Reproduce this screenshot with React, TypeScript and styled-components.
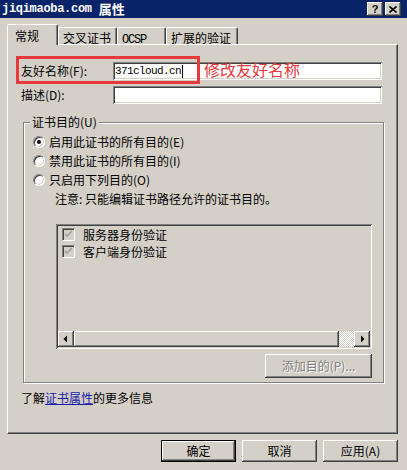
import React from 'react';
import styled, { createGlobalStyle, css } from 'styled-components';

const cjk = `"Noto Sans CJK SC", "Liberation Sans", sans-serif`;
const mono = `"Liberation Mono", "DejaVu Sans Mono", monospace`;

const GlobalStyle = createGlobalStyle`
  html, body { margin: 0; padding: 0; background: #d4d0c8; }
  body { font-family: ${cjk}; font-size: 12px; color: #000; }
  * { box-sizing: border-box; }
`;

const raised = css`
  background: #d4d0c8;
  box-shadow: inset -1px -1px #404040, inset 1px 1px #fff, inset -2px -2px #808080, inset 2px 2px #d4d0c8;
`;

const sunken = css`
  box-shadow: inset 1px 1px #808080, inset -1px -1px #fff, inset 2px 2px #404040, inset -2px -2px #d4d0c8;
`;

const Window = styled.div`
  width: 407px;
  height: 470px;
  background: #d4d0c8;
  display: flex;
  flex-direction: column;
  overflow: hidden;
`;

const TitleBar = styled.div`
  height: 18px;
  flex: none;
  background: #0a246a;
  display: flex;
  align-items: center;
  padding: 0 6px 0 2px;
`;

const TitleText = styled.div`
  flex: 1;
  display: flex;
  align-items: center;
  gap: 7px;
  color: #fff;
  line-height: 14px;
`;

const TitleDomain = styled.span`
  font-family: ${mono};
  font-size: 12px;
  font-weight: bold;
  letter-spacing: -0.3px;
`;

const TitleCjk = styled.span`
  font-family: ${cjk};
  font-size: 13px;
  font-weight: bold;
`;

const TitleButtons = styled.div`
  display: flex;
  gap: 2px;
`;

const TitleButton = styled.div`
  ${raised};
  width: 16px;
  height: 14px;
  display: flex;
  align-items: center;
  justify-content: center;
  font: bold 11px "Liberation Sans", sans-serif;
  color: #000;
`;

const Body = styled.div`
  flex: 1;
  display: flex;
  flex-direction: column;
  padding: 0 9px 0 7px;
`;

const TabStrip = styled.div`
  display: flex;
  align-items: flex-end;
  height: 20px;
  margin-top: 6px;
  position: relative;
  z-index: 1;
`;

const Tab = styled.div<{ $w: number; $active?: boolean }>`
  width: ${(p) => p.$w}px;
  height: ${(p) => (p.$active ? 21 : 17)}px;
  margin-bottom: ${(p) => (p.$active ? -1 : 0)}px;
  background: #d4d0c8;
  border-top: 1px solid #fff;
  border-left: 1px solid #fff;
  border-right: 1px solid #404040;
  border-radius: 2px 2px 0 0;
  box-shadow: inset -1px 0 #808080;
  padding: ${(p) => (p.$active ? '4px 0 0 7px' : '3px 0 0 4px')};
  font-size: 12px;
  line-height: 14px;
  white-space: nowrap;
`;

const Mono = styled.span`
  font-family: ${mono};
  font-size: 12px;
  letter-spacing: -1.2px;
`;

const Panel = styled.div`
  width: 391px;
  height: 390px;
  flex: none;
  border-top: 1px solid #fff;
  border-left: 1px solid #fff;
  border-right: 1px solid #404040;
  border-bottom: 1px solid #404040;
  box-shadow: inset -1px -1px #808080;
  padding: 17px 0 0 13px;
  display: flex;
  flex-direction: column;
`;

const FieldRow = styled.div<{ $gap?: number }>`
  position: relative;
  display: flex;
  align-items: center;
  height: 18px;
  margin-top: ${(p) => p.$gap ?? 0}px;
`;

const FieldLabel = styled.div`
  width: 92px;
  line-height: 14px;
  white-space: nowrap;
`;

const TextInput = styled.div`
  ${sunken};
  background: #fff;
  width: 269px;
  height: 18px;
  padding: 0 0 0 2px;
  display: flex;
  align-items: center;
  font-family: ${mono};
  font-size: 11px;
  letter-spacing: -0.6px;
`;

const Caret = styled.span`
  display: inline-block;
  width: 1px;
  height: 13px;
  background: #000;
  margin-left: 1px;
`;

const Highlight = styled.div`
  position: absolute;
  left: -5px;
  top: -6px;
  width: 184px;
  height: 28px;
  border: 3px solid #e8393b;
  pointer-events: none;
`;

const Annotation = styled.div`
  position: absolute;
  left: 183px;
  top: -2px;
  font-family: ${cjk};
  font-size: 16px;
  line-height: 18px;
  color: #e8393b;
  white-space: nowrap;
`;

const Group = styled.div`
  position: relative;
  margin: 18px 0 0 2px;
  width: 361px;
  height: 261px;
  border: 1px solid #808080;
  box-shadow: 1px 1px 0 #fff, inset 1px 1px 0 #fff;
  padding: 9px 0 0 9px;
  display: flex;
  flex-direction: column;
`;

const Legend = styled.div`
  position: absolute;
  top: -8px;
  left: 6px;
  padding: 0 2px;
  background: #d4d0c8;
  line-height: 14px;
`;

const RadioRow = styled.div`
  display: flex;
  align-items: center;
  gap: 4px;
  height: 19px;
  line-height: 14px;
`;

const Radio = styled.div<{ $checked?: boolean }>`
  width: 12px;
  height: 12px;
  border-radius: 50%;
  background: #fff;
  border: 1px solid;
  border-color: #808080 #fff #fff #808080;
  box-shadow: inset 1px 1px 0 #404040, inset -1px -1px 0 #d4d0c8;
  display: flex;
  align-items: center;
  justify-content: center;
  &::after {
    content: '';
    display: ${(p) => (p.$checked ? 'block' : 'none')};
    width: 4px;
    height: 4px;
    border-radius: 50%;
    background: #000;
  }
`;

const Note = styled.div`
  height: 20px;
  line-height: 20px;
  padding-left: 22px;
  white-space: nowrap;
`;

const ListArea = styled.div`
  margin: 15px 0 0 23px;
  width: 316px;
  display: flex;
  flex-direction: column;
`;

const ListBox = styled.div`
  ${sunken};
  background: #d4d0c8;
  height: 125px;
  padding: 2px;
  display: flex;
  flex-direction: column;
`;

const ListItem = styled.div`
  display: flex;
  align-items: center;
  gap: 8px;
  height: 17px;
  padding-left: 4px;
  line-height: 14px;
`;

const CheckBox = styled.div`
  width: 13px;
  height: 13px;
  background: #d4d0c8;
  border: 1px solid;
  border-color: #808080 #fff #fff #808080;
  box-shadow: inset 1px 1px 0 #404040, inset -1px -1px 0 #d4d0c8;
  display: flex;
  align-items: center;
  justify-content: center;
`;

const ScrollBar = styled.div`
  margin-top: auto;
  height: 16px;
  display: flex;
`;

const ScrollButton = styled.div`
  ${raised};
  width: 16px;
  height: 16px;
  flex: none;
  display: flex;
  align-items: center;
  justify-content: center;
`;

const ScrollThumb = styled.div`
  ${raised};
  flex: 1;
`;

const ScrollTrack = styled.div`
  width: 15px;
  flex: none;
  background: repeating-conic-gradient(#fff 0 25%, #d4d0c8 0 50%) 0 0 / 2px 2px;
`;

const PushButton = styled.div<{ $w: number; $h: number; $default?: boolean; $disabled?: boolean }>`
  ${raised};
  width: ${(p) => p.$w}px;
  height: ${(p) => p.$h}px;
  display: flex;
  align-items: center;
  justify-content: center;
  line-height: 14px;
  color: ${(p) => (p.$disabled ? '#808080' : '#000')};
  text-shadow: ${(p) => (p.$disabled ? '1px 1px 0 #fff' : 'none')};
  ${(p) =>
    p.$default &&
    css`
      border: 1px solid #000;
    `}
`;

const AddButton = styled(PushButton)`
  align-self: flex-end;
  margin-top: 5px;
`;

const InfoLine = styled.div`
  margin-top: 8px;
  line-height: 14px;
`;

const Link = styled.span`
  color: #1a1aa8;
  text-decoration: underline;
`;

const ButtonRow = styled.div`
  display: flex;
  justify-content: flex-end;
  gap: 6px;
  margin-top: 6px;
`;

const Check = () => (
  <svg width="9" height="9" viewBox="0 0 9 9">
    <path d="M1 4l2 2 5-5" fill="none" stroke="#a0a0a0" strokeWidth="1.6" />
  </svg>
);

export default function App() {
  return (
    <>
      <GlobalStyle />
      <Window>
        <TitleBar>
          <TitleText>
            <TitleDomain>jiqimaoba.com</TitleDomain>
            <TitleCjk>属性</TitleCjk>
          </TitleText>
          <TitleButtons>
            <TitleButton>?</TitleButton>
            <TitleButton>
              <svg width="8" height="7" viewBox="0 0 8 7">
                <path d="M0.5 0.5l7 6M7.5 0.5l-7 6" stroke="#000" strokeWidth="1.6" />
              </svg>
            </TitleButton>
          </TitleButtons>
        </TitleBar>
        <Body>
          <TabStrip>
            <Tab $w={51} $active>常规</Tab>
            <Tab $w={59}>交叉证书</Tab>
            <Tab $w={49}><Mono>OCSP</Mono></Tab>
            <Tab $w={72}>扩展的验证</Tab>
          </TabStrip>
          <Panel>
            <FieldRow>
              <FieldLabel>友好名称(F):</FieldLabel>
              <TextInput>
                371cloud.cn
                <Caret />
              </TextInput>
              <Highlight />
              <Annotation>修改友好名称</Annotation>
            </FieldRow>
            <FieldRow $gap={6}>
              <FieldLabel>描述(D):</FieldLabel>
              <TextInput />
            </FieldRow>
            <Group>
              <Legend>证书目的(U)</Legend>
              <RadioRow>
                <Radio $checked />
                启用此证书的所有目的(E)
              </RadioRow>
              <RadioRow>
                <Radio />
                禁用此证书的所有目的(I)
              </RadioRow>
              <RadioRow>
                <Radio />
                只启用下列目的(O)
              </RadioRow>
              <Note>注意: 只能编辑证书路径允许的证书目的。</Note>
              <ListArea>
                <ListBox>
                  <ListItem>
                    <CheckBox><Check /></CheckBox>
                    服务器身份验证
                  </ListItem>
                  <ListItem>
                    <CheckBox><Check /></CheckBox>
                    客户端身份验证
                  </ListItem>
                  <ScrollBar>
                    <ScrollButton>
                      <svg width="8" height="8" viewBox="0 0 8 8">
                        <path d="M5 0.5v7L1.5 4z" fill="#000" />
                      </svg>
                    </ScrollButton>
                    <ScrollThumb />
                    <ScrollTrack />
                    <ScrollButton>
                      <svg width="8" height="8" viewBox="0 0 8 8">
                        <path d="M3 0.5v7L6.5 4z" fill="#000" />
                      </svg>
                    </ScrollButton>
                  </ScrollBar>
                </ListBox>
                <AddButton $w={107} $h={24} $disabled>添加目的(P)...</AddButton>
              </ListArea>
            </Group>
            <InfoLine>
              了解<Link>证书属性</Link>的更多信息
            </InfoLine>
          </Panel>
          <ButtonRow>
            <PushButton $w={75} $h={22} $default>确定</PushButton>
            <PushButton $w={75} $h={22}>取消</PushButton>
            <PushButton $w={75} $h={22}>应用(A)</PushButton>
          </ButtonRow>
        </Body>
      </Window>
    </>
  );
}
